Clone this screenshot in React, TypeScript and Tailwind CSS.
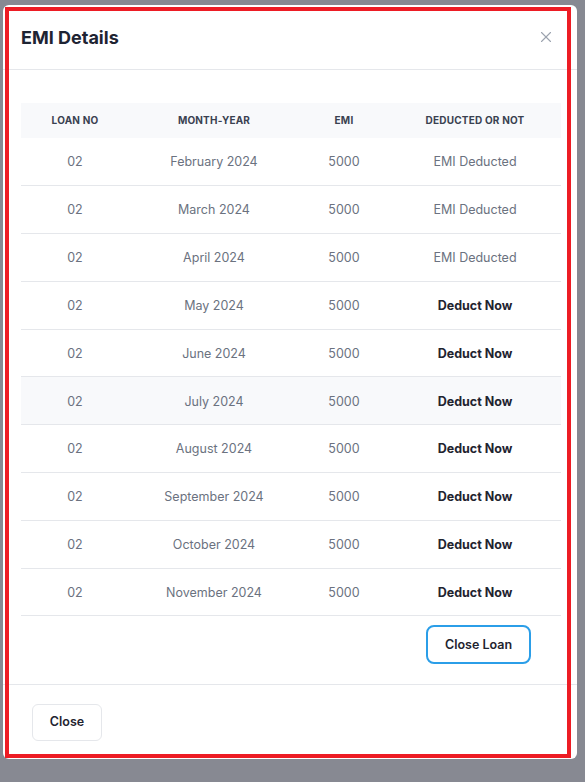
import { X } from 'lucide-react';

type EmiRow = {
  loanNo: string;
  month: string;
  emi: number;
  deducted: boolean;
};

const rows: EmiRow[] = [
  { loanNo: '02', month: 'February 2024', emi: 5000, deducted: true },
  { loanNo: '02', month: 'March 2024', emi: 5000, deducted: true },
  { loanNo: '02', month: 'April 2024', emi: 5000, deducted: true },
  { loanNo: '02', month: 'May 2024', emi: 5000, deducted: false },
  { loanNo: '02', month: 'June 2024', emi: 5000, deducted: false },
  { loanNo: '02', month: 'July 2024', emi: 5000, deducted: false },
  { loanNo: '02', month: 'August 2024', emi: 5000, deducted: false },
  { loanNo: '02', month: 'September 2024', emi: 5000, deducted: false },
  { loanNo: '02', month: 'October 2024', emi: 5000, deducted: false },
  { loanNo: '02', month: 'November 2024', emi: 5000, deducted: false },
];

export default function App() {
  return (
    <div className="relative h-[782px] w-[585px] overflow-hidden bg-[#878992] pl-[3px] pt-[5px] font-['Inter',sans-serif]">
      <div className="flex h-[754px] w-[574px] flex-col rounded-md bg-white">
        <header className="flex h-[65px] items-center justify-between border-b border-[#e5e7eb] pl-[18px] pr-[22px]">
          <h2 className="text-[18px] font-bold text-[#1e2433]">EMI Details</h2>
          <X className="h-[18px] w-[18px] text-[#9ca3af]" strokeWidth={1.5} />
        </header>

        <section className="flex-1 pl-[18px] pr-[16px] pt-[33px]">
          <table className="w-[540px] table-fixed border-collapse text-center">
            <colgroup>
              <col className="w-[108px]" />
              <col className="w-[170px]" />
              <col className="w-[90px]" />
              <col className="w-[172px]" />
            </colgroup>
            <thead>
              <tr className="h-[35px] bg-[#f8f9fb] text-[10px] font-bold uppercase tracking-[0.02em] text-[#3a4150]">
                <th>Loan No</th>
                <th>Month-Year</th>
                <th>EMI</th>
                <th>Deducted or not</th>
              </tr>
            </thead>
            <tbody className="text-[12.5px] text-[#6b7280]">
              {rows.map((row, i) => (
                <tr key={row.month} className={`h-[47.8px] border-b border-[#e5e7eb] ${i === 5 ? 'bg-[#f8f9fb]' : ''}`}>
                  <td className="pt-[2px]">{row.loanNo}</td>
                  <td className="pt-[2px]">{row.month}</td>
                  <td className="pt-[2px]">{row.emi}</td>
                  <td className={`pt-[2px] ${row.deducted ? '' : 'font-bold text-[#1f2430]'}`}>
                    {row.deducted ? 'EMI Deducted' : 'Deduct Now'}
                  </td>
                </tr>
              ))}
            </tbody>
          </table>

          <div className="mt-[9px] flex w-[540px] justify-end pr-[30px]">
            <button
              type="button"
              className="h-[39px] w-[105px] rounded-lg border-2 border-[#2b9ee8] bg-white text-[12.5px] font-semibold text-[#1f2430]"
            >
              Close Loan
            </button>
          </div>
        </section>

        <footer className="flex h-[75px] items-center border-t border-[#e5e7eb] pl-[29px]">
          <button
            type="button"
            className="h-[37px] w-[70px] rounded-md border border-[#e5e7eb] bg-white text-[12.5px] font-semibold text-[#1f2430]"
          >
            Close
          </button>
        </footer>
      </div>

      <div className="pointer-events-none absolute left-[5px] top-[7px] h-[751px] w-[566px] border-4 border-[#ed1c24]" />
    </div>
  );
}
